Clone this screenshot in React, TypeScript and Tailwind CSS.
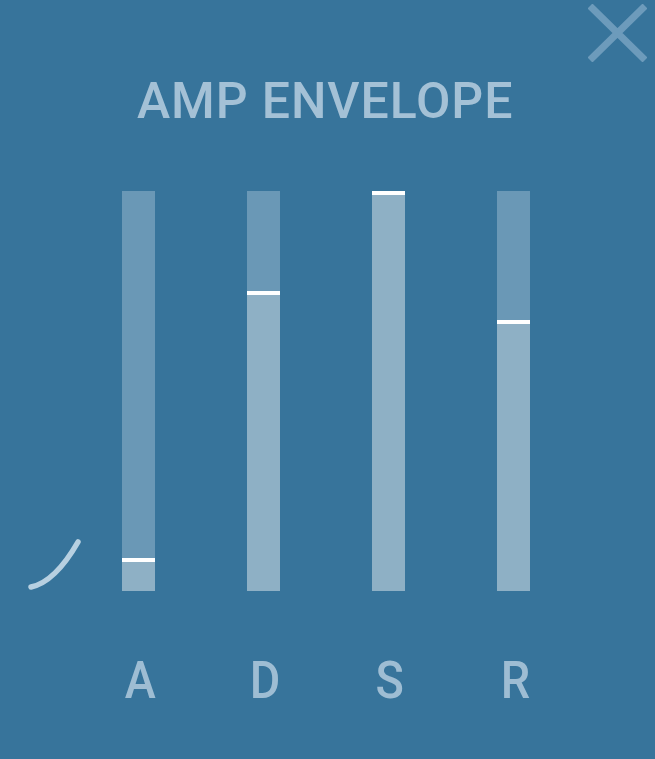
import React from "react";

type Stage = { label: string; fill: string };

// Fill heights are measured from the bottom of a 400px track.
const stages: Stage[] = [
  { label: "A", fill: "h-[33px]" },
  { label: "D", fill: "h-[300px]" },
  { label: "S", fill: "h-[400px]" },
  { label: "R", fill: "h-[271px]" },
];

function CloseIcon() {
  return (
    <svg
      className="absolute top-[4px] right-[8px]"
      width="59"
      height="58"
      viewBox="0 0 59 58"
      fill="none"
    >
      <path
        d="M2 2 L57 56 M57 2 L2 56"
        stroke="#6d9bbb"
        strokeWidth="7"
        strokeLinecap="butt"
      />
    </svg>
  );
}

function AttackCurve() {
  return (
    <svg width="54" height="52" viewBox="0 0 54 52" fill="none" className="mb-[1px]">
      <path
        d="M3 49 Q27 44 50 4"
        stroke="#b7d0e1"
        strokeWidth="5.5"
        strokeLinecap="round"
      />
    </svg>
  );
}

function Slider({ fill }: { fill: string }) {
  return (
    <div className="flex h-[400px] w-[33px] flex-col justify-end bg-[#6a98b6]">
      <div className={`${fill} w-full border-t-4 border-white bg-[#8eb0c5]`} />
    </div>
  );
}

export default function App() {
  return (
    <div
      className="relative flex h-[759px] w-[655px] flex-col overflow-hidden bg-[#37749b]"
      style={{ fontFamily: 'Roboto, "Liberation Sans", Arial, sans-serif' }}
    >
      <CloseIcon />

      <div className="pt-[76px] pl-[137px] text-[50px] font-medium leading-[50px] tracking-[0.9px] text-[#a4c1d6]">
        AMP ENVELOPE
      </div>

      <div className="mt-[65px] flex items-end pl-[28px]">
        <AttackCurve />
        <div className="ml-[40px] flex gap-[92px]">
          {stages.map((s) => (
            <Slider key={s.label} fill={s.fill} />
          ))}
        </div>
      </div>

      <div className="mt-[64px] flex gap-[92px] pl-[122px]">
        {stages.map((s) => (
          <div
            key={s.label}
            className="flex w-[33px] justify-center text-[52px] font-medium leading-[52px] text-[#9ebdd3]"
          >
            <span className="ml-[3px] scale-x-[0.9]">{s.label}</span>
          </div>
        ))}
      </div>
    </div>
  );
}
